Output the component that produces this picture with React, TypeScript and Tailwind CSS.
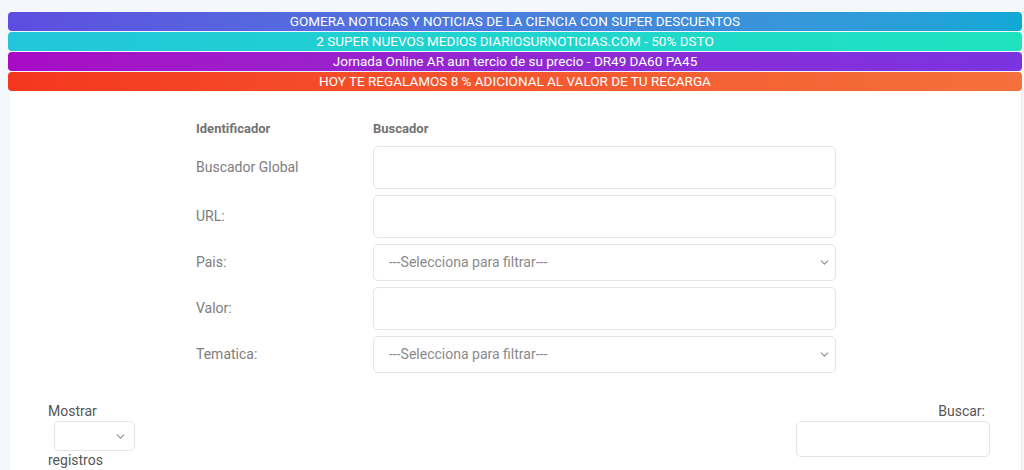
import { ChevronDown } from "lucide-react";

const banners = [
  { text: "GOMERA NOTICIAS Y NOTICIAS DE LA CIENCIA CON SUPER DESCUENTOS", bg: "bg-gradient-to-r from-[#5d4de0] to-[#0fa9d6]" },
  { text: "2 SUPER NUEVOS MEDIOS DIARIOSURNOTICIAS.COM - 50% DSTO", bg: "bg-gradient-to-r from-[#22c6da] to-[#1fe3bf]" },
  { text: "Jornada Online AR aun tercio de su precio - DR49 DA60 PA45", bg: "bg-gradient-to-r from-[#a80ac4] to-[#7a34e0]" },
  { text: "HOY TE REGALAMOS 8 % ADICIONAL AL VALOR DE TU RECARGA", bg: "bg-gradient-to-r from-[#f4361e] to-[#f4703c]" },
];

type Row = { label: string; kind: "input" | "select" };

const rows: Row[] = [
  { label: "Buscador Global", kind: "input" },
  { label: "URL:", kind: "input" },
  { label: "Pais:", kind: "select" },
  { label: "Valor:", kind: "input" },
  { label: "Tematica:", kind: "select" },
];

function FakeSelect({ placeholder, className }: { placeholder?: string; className: string }) {
  return (
    <div className={`flex items-center justify-between border border-[#e2e5ea] rounded-[5px] bg-white ${className}`}>
      <span className="text-[14px] text-[#8a8a8a]">{placeholder}</span>
      <ChevronDown size={13} strokeWidth={2} className="text-[#8f8f8f] shrink-0" />
    </div>
  );
}

export default function App() {
  return (
    <div className="w-[1024px] h-[470px] overflow-hidden bg-[#f4f8fc] font-['Roboto',sans-serif] pl-[8px] pr-[2px] pt-[12px]">
      <div className="flex flex-col gap-px">
        {banners.map((b) => (
          <div
            key={b.text}
            className={`${b.bg} h-[19px] rounded-[4px] flex items-center justify-center text-white text-[13.5px] leading-none`}
          >
            {b.text}
          </div>
        ))}
      </div>
      <div className="ml-[2px] bg-white border-r border-[#e6e9ee] h-full pt-[28px] pl-[38px] pr-[31px]">
        <div className="ml-[148px] w-[640px] flex flex-col">
          <div className="flex h-[20px] items-center text-[13px] font-bold text-[#737373]">
            <div className="w-[177px]">Identificador</div>
            <div>Buscador</div>
          </div>
          <div className="flex flex-col gap-[6px] mt-[7px]">
            {rows.map((r) => (
              <div key={r.label} className="flex items-center">
                <div className="w-[177px] text-[14px] text-[#7d7d7d]">{r.label}</div>
                {r.kind === "input" ? (
                  <div className="w-[463px] h-[43px] border border-[#e2e5ea] rounded-[5px] bg-white" />
                ) : (
                  <FakeSelect
                    placeholder="---Selecciona para filtrar---"
                    className="w-[463px] h-[37px] pl-[15px] pr-[4px]"
                  />
                )}
              </div>
            ))}
          </div>
        </div>
        <div className="flex justify-between mt-[30px]">
          <div className="flex flex-col text-[14px] text-[#555] leading-[16px]">
            <span>Mostrar</span>
            <FakeSelect className="ml-[6px] mt-[2px] mb-[1px] w-[81px] h-[30px] pr-[7px]" />
            <span>registros</span>
          </div>
          <div className="flex flex-col items-end text-[14px] text-[#555] leading-[16px]">
            <span className="mr-[5px]">Buscar:</span>
            <div className="mt-[2px] w-[194px] h-[36px] border border-[#e2e5ea] rounded-[5px] bg-white" />
          </div>
        </div>
      </div>
    </div>
  );
}
